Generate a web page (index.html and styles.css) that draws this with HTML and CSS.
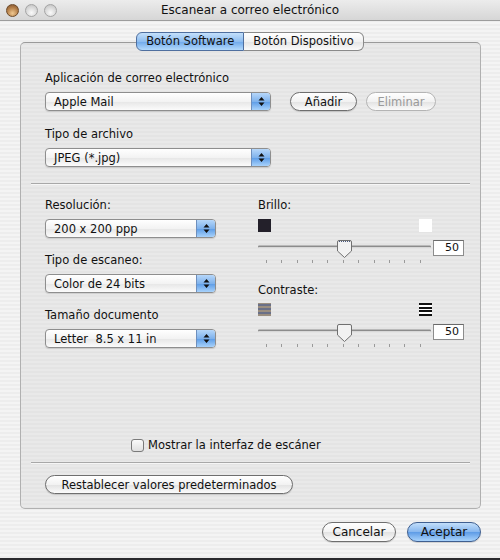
FILE: index.html
```html
<!DOCTYPE html>
<html lang="es">
<head>
<meta charset="UTF-8"/>
<title>Escanear a correo electrónico</title>
<link rel="stylesheet" href="styles.css">
</head>
<body>

<div class="window">
  <div class="titlebar">
    <div class="lights">
      <span class="light close"></span>
      <span class="light"></span>
      <span class="light"></span>
    </div>
    <div class="title">Escanear a correo electrónico</div>
  </div>

  <div class="content">
    <div class="tabs">
      <span class="tab active">Botón Software</span>
      <span class="tab">Botón Dispositivo</span>
    </div>

    <div class="group">
      <!-- Mail app + file type -->
      <section class="app">
        <div class="label">Aplicación de correo electrónico</div>
        <div class="row">
          <div class="popup wide">
            <span class="popup-text">Apple Mail</span>
            <span class="arrows"><svg width="7" height="11" viewBox="0 0 7 11"><path d="M3.5 1 L6.5 4.5 H0.5 Z M3.5 10 L6.5 6.5 H0.5 Z" fill="#111"/></svg></span>
          </div>
          <button class="btn add">Añadir</button>
          <button class="btn remove" disabled>Eliminar</button>
        </div>
        <div class="label">Tipo de archivo</div>
        <div class="popup wide">
          <span class="popup-text">JPEG (*.jpg)</span>
          <span class="arrows"><svg width="7" height="11" viewBox="0 0 7 11"><path d="M3.5 1 L6.5 4.5 H0.5 Z M3.5 10 L6.5 6.5 H0.5 Z" fill="#111"/></svg></span>
        </div>
      </section>

      <hr class="sep">

      <!-- Scan settings -->
      <section class="settings">
        <div class="col-left">
          <div class="label">Resolución:</div>
          <div class="popup narrow">
            <span class="popup-text">200 x 200 ppp</span>
            <span class="arrows"><svg width="7" height="11" viewBox="0 0 7 11"><path d="M3.5 1 L6.5 4.5 H0.5 Z M3.5 10 L6.5 6.5 H0.5 Z" fill="#111"/></svg></span>
          </div>
          <div class="label">Tipo de escaneo:</div>
          <div class="popup narrow">
            <span class="popup-text">Color de 24 bits</span>
            <span class="arrows"><svg width="7" height="11" viewBox="0 0 7 11"><path d="M3.5 1 L6.5 4.5 H0.5 Z M3.5 10 L6.5 6.5 H0.5 Z" fill="#111"/></svg></span>
          </div>
          <div class="label">Tamaño documento</div>
          <div class="popup narrow">
            <span class="popup-text">Letter&nbsp; 8.5 x 11 in</span>
            <span class="arrows"><svg width="7" height="11" viewBox="0 0 7 11"><path d="M3.5 1 L6.5 4.5 H0.5 Z M3.5 10 L6.5 6.5 H0.5 Z" fill="#111"/></svg></span>
          </div>
        </div>

        <div class="col-right">
          <div class="label">Brillo:</div>
          <div class="ends">
            <span class="swatch dark"></span>
            <span class="swatch light-sw"></span>
          </div>
          <div class="slider-row">
            <svg class="slider" width="173" height="26" viewBox="0 0 173 26">
              <line x1="1" y1="7.5" x2="172" y2="7.5" stroke="#8c8c8c" stroke-width="2" stroke-linecap="round"/>
              <line x1="1" y1="8.5" x2="172" y2="8.5" stroke="#d8d8d8" stroke-width="1"/>
              <path d="M79.5 3 Q79.5 1.5 81 1.5 H92 Q93.5 1.5 93.5 3 V12 L86.5 18.5 L79.5 12 Z" fill="#f2f2f2" stroke="#707070"/>
              <line x1="81" y1="2.5" x2="92" y2="2.5" stroke="#4a5a80" stroke-dasharray="1 1"/>
              <g stroke="#9a9a9a">
                <line x1="8.5" y1="21" x2="8.5" y2="24"/><line x1="23.5" y1="21" x2="23.5" y2="24"/>
                <line x1="39.5" y1="21" x2="39.5" y2="24"/><line x1="54.5" y1="21" x2="54.5" y2="24"/>
                <line x1="69.5" y1="21" x2="69.5" y2="24"/><line x1="85.5" y1="21" x2="85.5" y2="24"/>
                <line x1="100.5" y1="21" x2="100.5" y2="24"/><line x1="116.5" y1="21" x2="116.5" y2="24"/>
                <line x1="131.5" y1="21" x2="131.5" y2="24"/><line x1="146.5" y1="21" x2="146.5" y2="24"/>
                <line x1="162.5" y1="21" x2="162.5" y2="24"/>
              </g>
            </svg>
            <span class="value">50</span>
          </div>

          <div class="label contrast-label">Contraste:</div>
          <div class="ends">
            <svg width="13" height="13" viewBox="0 0 13 13">
              <rect width="13" height="13" fill="#9a8e80"/>
              <rect y="1" width="13" height="2" fill="#6a7088"/>
              <rect y="5" width="13" height="2" fill="#6a7088"/>
              <rect y="9" width="13" height="2" fill="#6a7088"/>
            </svg>
            <svg width="13" height="13" viewBox="0 0 13 13">
              <rect width="13" height="13" fill="#fff"/>
              <rect y="0" width="13" height="2" fill="#111"/>
              <rect y="4" width="13" height="2" fill="#111"/>
              <rect y="7" width="13" height="2" fill="#111"/>
              <rect y="11" width="13" height="2" fill="#111"/>
            </svg>
          </div>
          <div class="slider-row">
            <svg class="slider" width="173" height="26" viewBox="0 0 173 26">
              <line x1="1" y1="7.5" x2="172" y2="7.5" stroke="#8c8c8c" stroke-width="2" stroke-linecap="round"/>
              <line x1="1" y1="8.5" x2="172" y2="8.5" stroke="#d8d8d8" stroke-width="1"/>
              <path d="M79.5 3 Q79.5 1.5 81 1.5 H92 Q93.5 1.5 93.5 3 V12 L86.5 18.5 L79.5 12 Z" fill="#f2f2f2" stroke="#707070"/>
              <g stroke="#9a9a9a">
                <line x1="8.5" y1="21" x2="8.5" y2="24"/><line x1="23.5" y1="21" x2="23.5" y2="24"/>
                <line x1="39.5" y1="21" x2="39.5" y2="24"/><line x1="54.5" y1="21" x2="54.5" y2="24"/>
                <line x1="69.5" y1="21" x2="69.5" y2="24"/><line x1="85.5" y1="21" x2="85.5" y2="24"/>
                <line x1="100.5" y1="21" x2="100.5" y2="24"/><line x1="116.5" y1="21" x2="116.5" y2="24"/>
                <line x1="131.5" y1="21" x2="131.5" y2="24"/><line x1="146.5" y1="21" x2="146.5" y2="24"/>
                <line x1="162.5" y1="21" x2="162.5" y2="24"/>
              </g>
            </svg>
            <span class="value">50</span>
          </div>
        </div>
      </section>

      <label class="check-row">
        <span class="checkbox"></span>
        <span>Mostrar la interfaz de escáner</span>
      </label>

      <hr class="sep">

      <div class="reset-row">
        <button class="btn reset">Restablecer valores predeterminados</button>
      </div>
    </div>

    <div class="actions">
      <button class="btn cancel">Cancelar</button>
      <button class="btn default">Aceptar</button>
    </div>
  </div>
</div>

</body>
</html>
```

FILE: styles.css
```css
*{box-sizing:border-box;margin:0;padding:0;}
body{width:500px;height:560px;background:#2a2a2e;font-family:"DejaVu Sans","Liberation Sans",sans-serif;font-size:11px;color:#111;overflow:hidden;}

.window{width:500px;height:558px;background:repeating-linear-gradient(#ededed 0 2px,#f4f4f4 2px 4px);}

/* title bar */
.titlebar{height:21px;display:flex;align-items:center;position:relative;border-bottom:1px solid #9c9c9c;
background:linear-gradient(#ececec,#d6d6d6);}
.lights{display:flex;gap:6px;padding-left:6px;width:80px;}
.light{width:13px;height:13px;border-radius:50%;border:1px solid #a4a4a4;background:radial-gradient(circle at 50% 70%,#fafafa,#d0d0d0 70%,#b8b8b8);}
.light.close{border-color:#6d4a28;background:radial-gradient(circle at 50% 75%,#f0c890,#b07a44 60%,#7a5030);}
.title{flex:1;text-align:center;font-size:12px;margin-right:80px;color:#111;}

/* tabs */
.tabs{display:flex;justify-content:center;margin-top:11px;margin-bottom:-9px;position:relative;z-index:1;}
.tab{height:19px;line-height:17px;padding:0 9px;border:1px solid #8a8a8a;white-space:nowrap;
background:linear-gradient(#ffffff,#f1f1f1 50%,#e4e4e4 51%,#fafafa);font-size:11.5px;}
.tab:first-child{border-radius:6px 0 0 6px;}
.tab:last-child{border-radius:0 6px 6px 0;border-left:none;}
.tab.active{background:linear-gradient(#c4e0fb,#8ebdf0 50%,#6ea8ea 51%,#b4dafc);border-color:#4f6f9f;}

/* group box */
.group{margin-left:20px;width:461px;height:467px;border:1px solid #b0b0b0;border-top-color:#9a9a9a;border-radius:5px;
background:repeating-linear-gradient(#e4e4e4 0 2px,#e9e9e9 2px 4px);}

.label{height:15px;line-height:15px;font-size:11.5px;margin-bottom:6px;}

.app{padding:28px 0 0 24px;}
.app .label:nth-child(3){margin-top:16px;}
.row{display:flex;align-items:center;}

.popup{height:19px;display:flex;align-items:center;border:1px solid #8e8e8e;border-radius:4px;overflow:hidden;
background:linear-gradient(#ffffff,#f3f3f3 50%,#e6e6e6 51%,#fbfbfb);box-shadow:0 1px 1px rgba(0,0,0,0.12);}
.popup.wide{width:226px;}
.popup.narrow{width:171px;}
.popup-text{flex:1;padding-left:8px;font-size:11.5px;white-space:nowrap;}
.arrows{width:19px;height:100%;display:flex;align-items:center;justify-content:center;border-left:1px solid #6e8fbd;
background:linear-gradient(#b6d7fa,#7fb2ec 50%,#5b9be6 51%,#a8d2fb);}

.btn{height:19px;border:1px solid #6e6e6e;border-radius:10px;font-family:inherit;font-size:11.5px;color:#111;
background:linear-gradient(#ffffff,#f2f2f2 50%,#e2e2e2 51%,#fbfbfb);box-shadow:0 1px 1px rgba(0,0,0,0.15);}
.btn.add{width:67px;margin-left:19px;}
.btn.remove{width:70px;margin-left:9px;color:#9a9a9a;border-color:#b4b4b4;box-shadow:none;}

.sep{border:none;border-top:1px solid #a8a8a8;border-bottom:1px solid #f6f6f6;margin:16px 10px 0;}

/* settings */
.settings{display:grid;grid-template-columns:213px 1fr;padding:13px 0 0 24px;}
.col-left .label{margin-top:15px;}
.col-left .label:first-child{margin-top:0;}
.ends{display:flex;justify-content:space-between;width:174px;height:13px;}
.swatch{width:13px;height:13px;}
.swatch.dark{background:#23202a;}
.swatch.light-sw{background:#fff;}
.slider-row{display:flex;align-items:flex-start;margin-top:7px;}
.slider{display:block;}
.value{width:31px;height:16px;margin:1px 0 0 2px;border:1px solid #8c8c8c;border-top-color:#6a6a6a;background:#fff;
text-align:right;padding-right:4px;line-height:14px;font-size:11px;}
.contrast-label{margin-top:18px;margin-bottom:5px;}

/* checkbox */
.check-row{display:flex;align-items:center;gap:4px;margin:89px 0 0 110px;height:14px;font-size:11.5px;}
.checkbox{width:13px;height:13px;border:1px solid #7a7a7a;border-radius:3px;background:linear-gradient(#fafafa,#e0e0e0);}
.check-row + .sep{margin-top:10px;}

.reset-row{padding:11px 0 0 24px;}
.btn.reset{width:248px;}

/* bottom buttons */
.actions{display:flex;justify-content:flex-end;gap:11px;padding:13px 19px 0 0;}
.btn.cancel,.btn.default{width:74px;height:20px;font-size:12px;}
.btn.default{border-color:#3f5f90;background:linear-gradient(#c2defa,#86b6ee 50%,#5d9be6 51%,#a9d3fc);}
```
